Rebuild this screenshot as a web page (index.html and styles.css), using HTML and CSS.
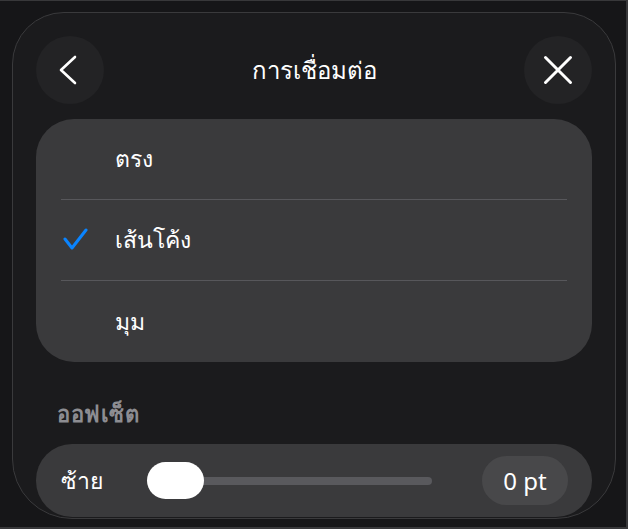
FILE: index.html
```html
<!DOCTYPE html>
<html lang="th">
<head>
    <meta charset="UTF-8">
    <title>การเชื่อมต่อ</title>
    <link rel="stylesheet" href="styles.css">
</head>
<body>
    <div class="screen">
        <div class="panel">
            <div class="header">
                <button class="round-btn" aria-label="ย้อนกลับ">
                    <svg width="68" height="68" viewBox="0 0 68 68">
                        <polyline points="39,21 25,34 39,47" fill="none" stroke="#fff" stroke-width="2.6" stroke-linecap="round" stroke-linejoin="round"/>
                    </svg>
                </button>
                <h1 class="title">การเชื่อมต่อ</h1>
                <button class="round-btn" aria-label="ปิด">
                    <svg width="68" height="68" viewBox="0 0 68 68">
                        <path d="M21.5 21.5 L46.5 46.5 M46.5 21.5 L21.5 46.5" fill="none" stroke="#fff" stroke-width="3" stroke-linecap="round"/>
                    </svg>
                </button>
            </div>

            <div class="options">
                <div class="option">
                    <span class="check"></span>
                    <span class="option-label">ตรง</span>
                </div>
                <div class="separator"></div>
                <div class="option">
                    <span class="check">
                        <svg width="26" height="24" viewBox="0 0 26 24">
                            <polyline points="2,11 9,20 23,2" fill="none" stroke="#0a84ff" stroke-width="3" stroke-linecap="round" stroke-linejoin="round"/>
                        </svg>
                    </span>
                    <span class="option-label">เส้นโค้ง</span>
                </div>
                <div class="separator"></div>
                <div class="option">
                    <span class="check"></span>
                    <span class="option-label">มุม</span>
                </div>
            </div>

            <div class="section-label">ออฟเซ็ต</div>

            <div class="slider-row">
                <span class="slider-label">ซ้าย</span>
                <div class="slider">
                    <div class="slider-track"></div>
                    <div class="slider-thumb"></div>
                </div>
                <span class="value-pill">0 pt</span>
            </div>
        </div>
    </div>
</body>
</html>
```

FILE: styles.css
```css
html, body {
    margin: 0;
    background-color: #161618;
}
body {
    font-family: "Noto Sans", "Liberation Sans", sans-serif;
    color: #fff;
}
.screen {
    box-sizing: border-box;
    width: 628px;
    height: 529px;
    border-top: 1px solid #38383a;
    border-right: 2px solid #38383a;
    border-bottom: 2px solid #38383a;
    padding: 11px 0 0 12px;
    overflow: hidden;
}
.panel {
    box-sizing: border-box;
    width: 604px;
    height: 507px;
    border: 1px solid #3a3a3c;
    border-radius: 52px 52px 60px 60px;
    background-color: #1b1b1d;
    padding: 23px 23px 0 23px;
}
.header {
    display: flex;
    align-items: center;
    justify-content: space-between;
    height: 68px;
}
.round-btn {
    width: 68px;
    height: 68px;
    padding: 0;
    border: none;
    border-radius: 50%;
    background-color: #232325;
    display: flex;
}
.title {
    margin: 0;
    font-size: 24px;
    font-weight: 500;
    line-height: 30px;
}
.options {
    margin-top: 15px;
    background-color: #3a3a3c;
    border-radius: 38px;
}
.option {
    display: flex;
    align-items: center;
    height: 80px;
    padding-left: 27px;
}
.option:last-child {
    height: 81px;
}
.check {
    width: 26px;
    height: 24px;
    margin-right: 26px;
    display: flex;
}
.option-label {
    font-size: 23px;
    font-weight: 500;
}
.separator {
    height: 1px;
    margin: 0 25px;
    background-color: #57575b;
}
.section-label {
    margin-top: 37px;
    padding-left: 21px;
    font-size: 22px;
    font-weight: 700;
    letter-spacing: 0.5px;
    line-height: 28px;
    color: #8d8d92;
}
.slider-row {
    display: flex;
    align-items: center;
    margin-top: 17px;
    height: 73px;
    padding: 0 24px 0 25px;
    background-color: #3a3a3c;
    border-radius: 36px;
}
.slider-label {
    width: 86px;
    font-size: 23px;
    font-weight: 500;
}
.slider {
    position: relative;
    flex: 1;
    height: 37px;
    margin-right: 50px;
    display: flex;
    align-items: center;
}
.slider-track {
    width: 100%;
    height: 8px;
    border-radius: 4px;
    background-color: #59595d;
}
.slider-thumb {
    position: absolute;
    left: 0;
    top: 0;
    width: 57px;
    height: 37px;
    border-radius: 19px;
    background-color: #fff;
}
.value-pill {
    width: 86px;
    height: 49px;
    border-radius: 25px;
    background-color: #48484a;
    font-size: 24px;
    line-height: 49px;
    text-align: center;
}
```
